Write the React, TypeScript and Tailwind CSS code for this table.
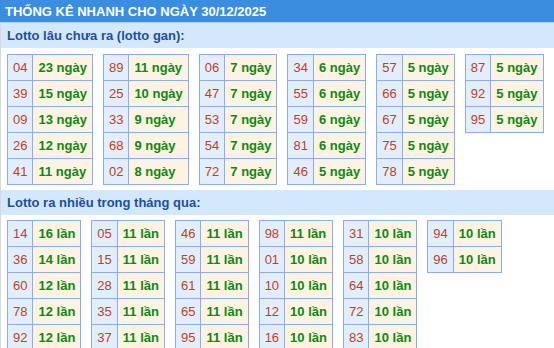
import React from "react";

type Row = [string, string];

const gan: Row[][] = [
  [["04", "23"], ["39", "15"], ["09", "13"], ["26", "12"], ["41", "11"]],
  [["89", "11"], ["25", "10"], ["33", "9"], ["68", "9"], ["02", "8"]],
  [["06", "7"], ["47", "7"], ["53", "7"], ["54", "7"], ["72", "7"]],
  [["34", "6"], ["55", "6"], ["59", "6"], ["81", "6"], ["46", "5"]],
  [["57", "5"], ["66", "5"], ["67", "5"], ["75", "5"], ["78", "5"]],
  [["87", "5"], ["92", "5"], ["95", "5"]],
];

const nhieu: Row[][] = [
  [["14", "16"], ["36", "14"], ["60", "12"], ["78", "12"], ["92", "12"]],
  [["05", "11"], ["15", "11"], ["28", "11"], ["35", "11"], ["37", "11"]],
  [["46", "11"], ["59", "11"], ["61", "11"], ["65", "11"], ["95", "11"]],
  [["98", "11"], ["01", "10"], ["10", "10"], ["12", "10"], ["16", "10"]],
  [["31", "10"], ["58", "10"], ["64", "10"], ["72", "10"], ["83", "10"]],
  [["94", "10"], ["96", "10"]],
];

function StatTable({ rows, unit }: { rows: Row[]; unit: string }) {
  return (
    <div className="grid grid-cols-[auto_auto] self-start border-l border-t border-[#8badf0]">
      {rows.map(([n, v], i) => (
        <React.Fragment key={i}>
          <div className="flex h-[26px] items-center justify-center border-b border-r border-[#8badf0] bg-[#e3eefd] px-[5px] text-[13px] text-[#bb4126]">
            {n}
          </div>
          <div className="flex h-[26px] items-center border-b border-r border-[#8badf0] bg-[#fdf3e3] px-[5px] text-[13px] font-bold text-[#118711]">
            {v} {unit}
          </div>
        </React.Fragment>
      ))}
    </div>
  );
}

function Band({ title }: { title: string }) {
  return (
    <div className="flex h-[25px] items-center bg-[#d4e8fc] pl-[6px] text-[13px] font-bold text-[#1c4f9e]">
      {title}
    </div>
  );
}

export default function App() {
  return (
    <div
      className="w-[554px] bg-white leading-none"
      style={{ fontFamily: '"Liberation Sans", Arial, sans-serif' }}
    >
      <div className="flex h-[23px] items-center border-b border-[#b6d3f1] bg-[#3a8ddf] pl-[5px] text-[13px] font-bold text-white">
        THỐNG KÊ NHANH CHO NGÀY 30/12/2025
      </div>
      <div className="border-l border-[#d3d9e0]">
        <Band title="Lotto lâu chưa ra (lotto gan):" />
        <div className="flex gap-[10px] pl-[6px] pt-[6px] pb-[5px]">
          {gan.map((t, i) => (
            <StatTable key={i} rows={t} unit="ngày" />
          ))}
        </div>
        <Band title="Lotto ra nhiều trong tháng qua:" />
        <div className="flex gap-[10px] pl-[6px] pt-[5px] pb-[5px]">
          {nhieu.map((t, i) => (
            <StatTable key={i} rows={t} unit="lần" />
          ))}
        </div>
      </div>
    </div>
  );
}
